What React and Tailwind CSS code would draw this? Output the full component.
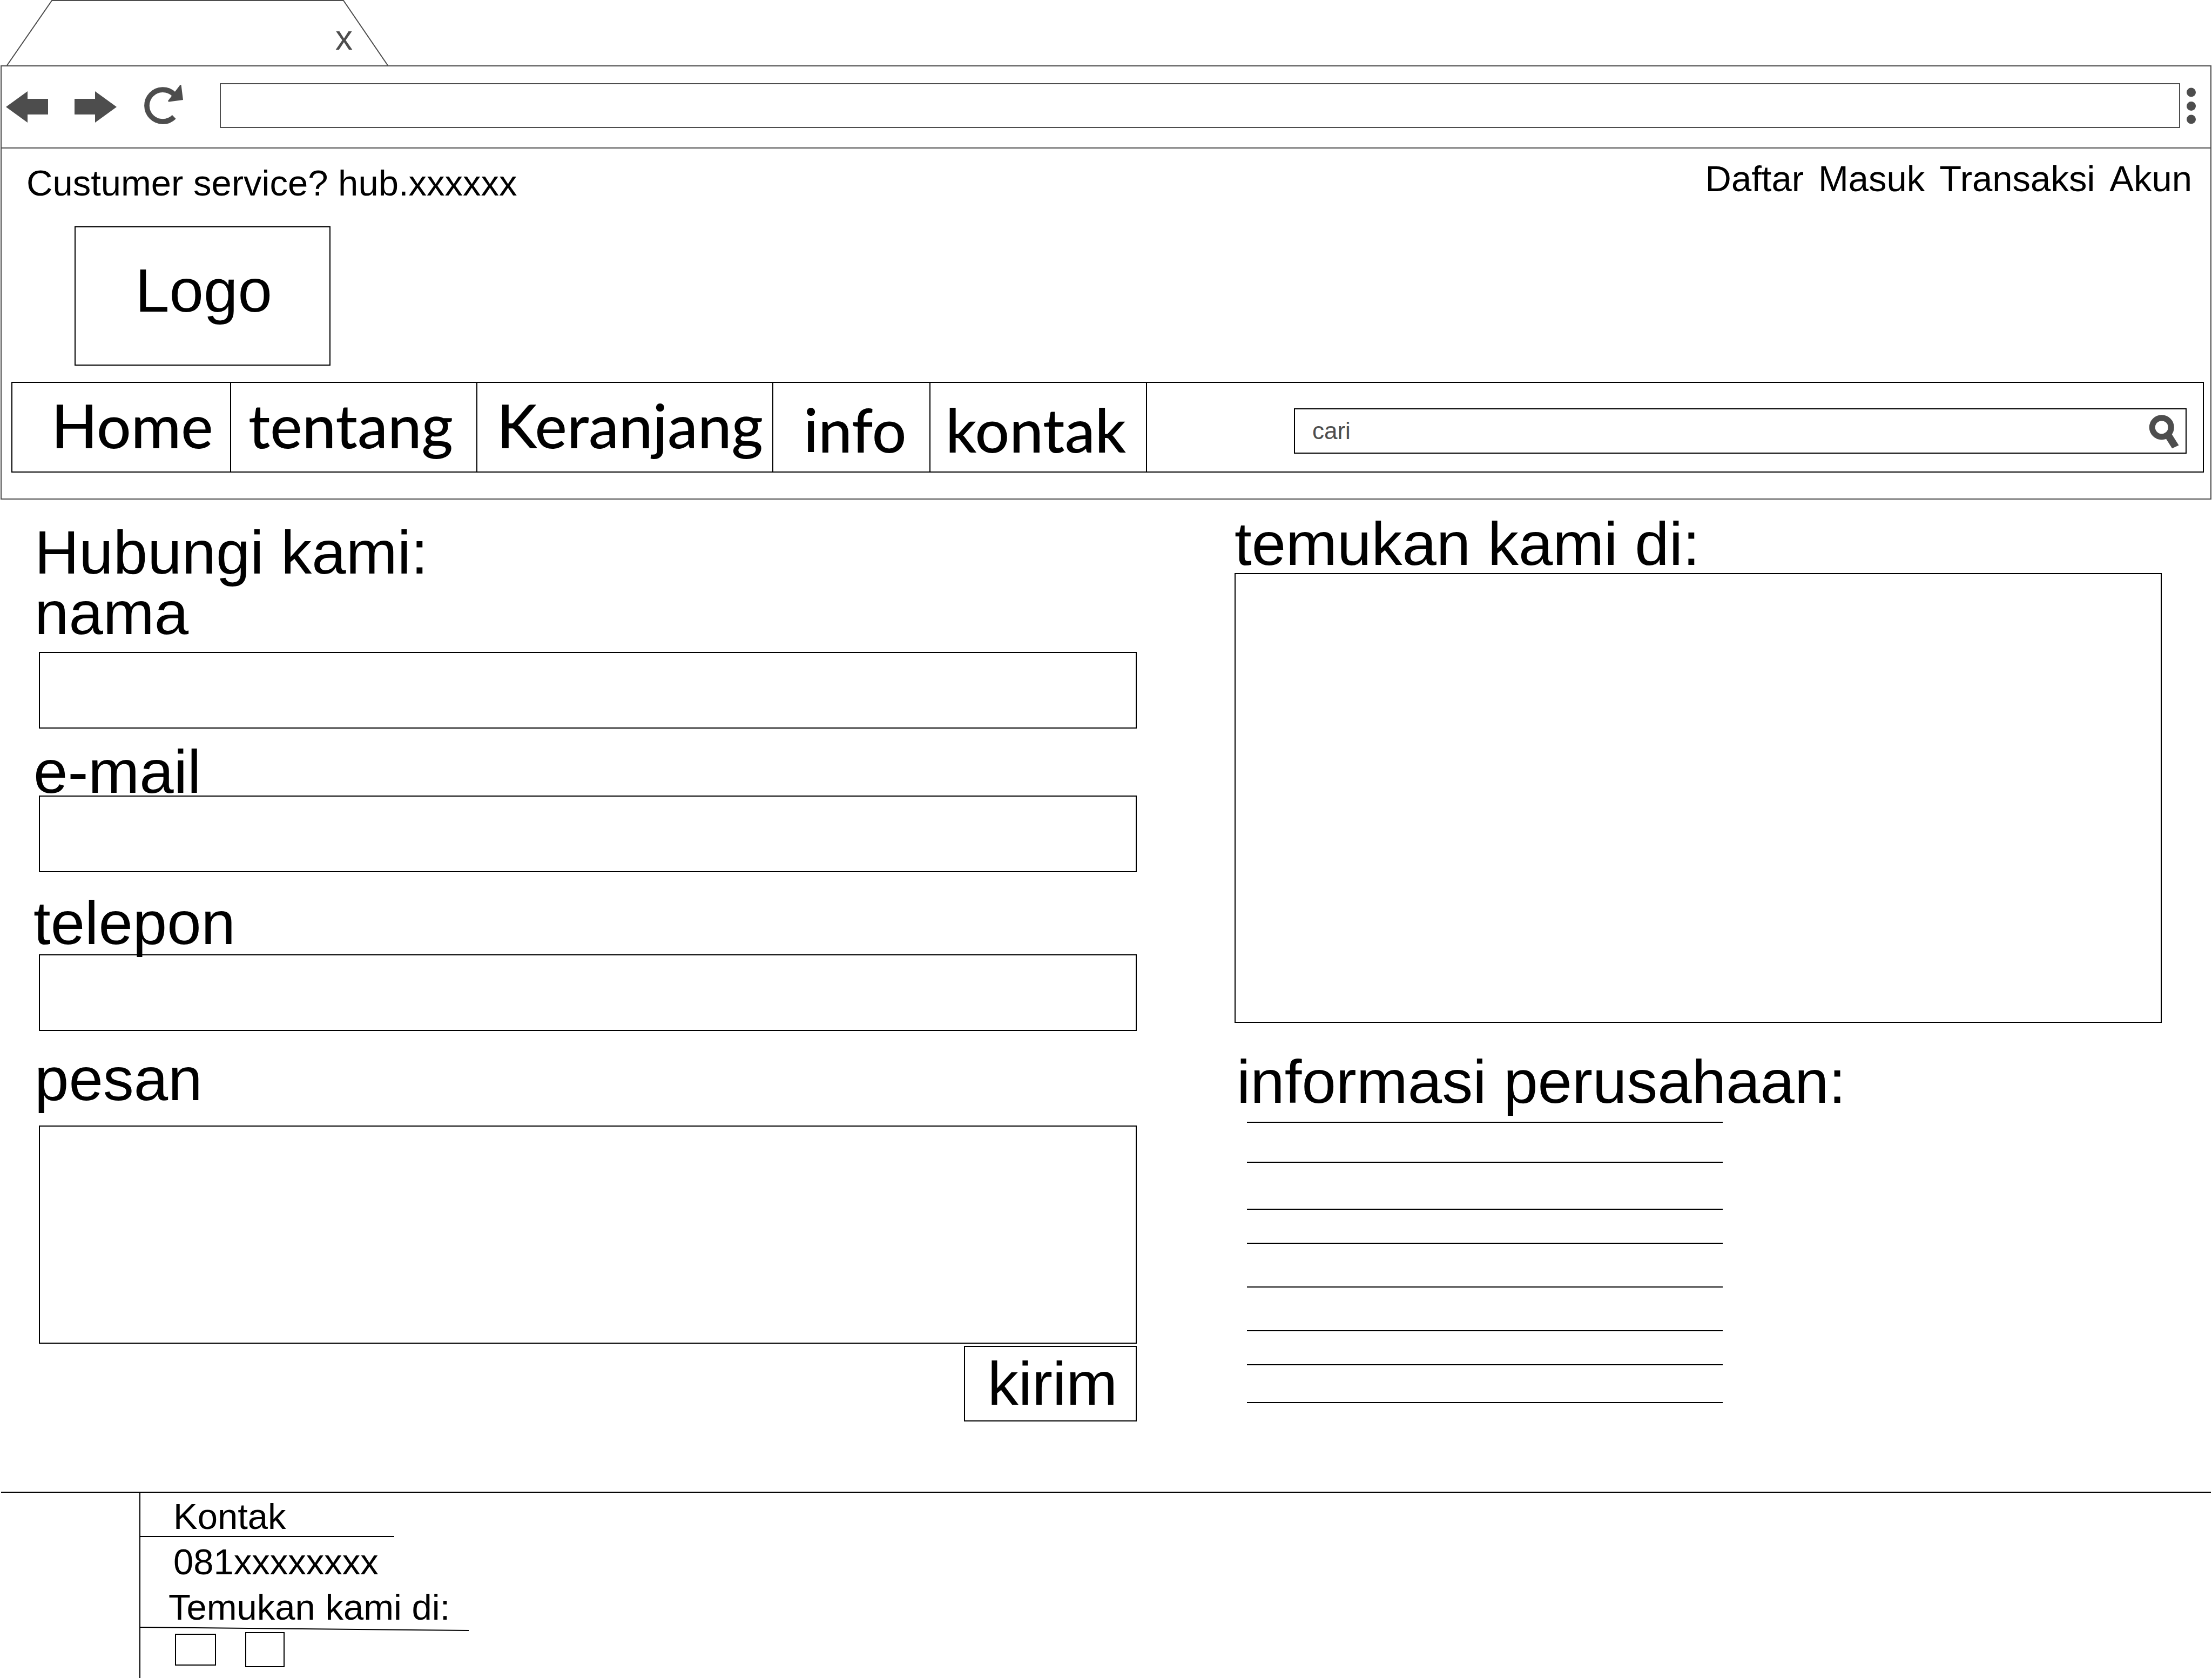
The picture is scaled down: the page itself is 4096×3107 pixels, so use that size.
const NAV_ITEMS = [
  { label: "Home", pad: "pl-[72px] pb-2" },
  { label: "tentang", pad: "pl-8 pb-2" },
  { label: "Keranjang", pad: "pl-9 pb-2" },
  { label: "info", pad: "pl-14 pt-2" },
  { label: "kontak", pad: "pl-7 pt-2" },
];

const ACCOUNT_LINKS = ["Daftar", "Masuk", "Transaksi", "Akun"];

const INFO_LINE_GAPS = [
  "mt-[30px]",
  "mt-[72px]",
  "mt-[85px]",
  "mt-[61px]",
  "mt-[79px]",
  "mt-[79px]",
  "mt-[61px]",
  "mt-[68px]",
];

function BackIcon() {
  return (
    <svg className="h-[83px] w-[78px] fill-[#4d4d4d]" viewBox="0 0 78 83" aria-hidden="true">
      <polygon points="0,44 40,15 40,29 78,29 78,58 40,58 40,73" />
    </svg>
  );
}

function ForwardIcon() {
  return (
    <svg className="h-[83px] w-[78px] fill-[#4d4d4d]" viewBox="0 0 78 83" aria-hidden="true">
      <polygon points="78,44 38,15 38,29 0,29 0,58 38,58 38,73" />
    </svg>
  );
}

function ReloadIcon() {
  return (
    <svg className="h-[83px] w-[72px]" viewBox="69 62 254 292" aria-hidden="true">
      <path d="M264 282 A104 104 0 1 1 262 133" fill="none" stroke="#4d4d4d" strokeWidth="34" />
      <path d="M303 74 Q308 70 311 76 L323 171 L230 183 Q223 182 225 176 Z" fill="#4d4d4d" />
    </svg>
  );
}

function DotsIcon() {
  return (
    <svg className="h-[83px] w-[17px] fill-[#4d4d4d]" viewBox="0 0 17 83" aria-hidden="true">
      <circle cx="8.5" cy="17" r="8.5" />
      <circle cx="8.5" cy="42.5" r="8.5" />
      <circle cx="8.5" cy="67" r="8.5" />
    </svg>
  );
}

function SearchIcon() {
  return (
    <svg className="h-20 w-[57px]" viewBox="0 2 57 80" aria-hidden="true">
      <circle cx="24.8" cy="35.3" r="17.5" fill="none" stroke="#4d4d4d" strokeWidth="11" />
      <polygon points="30,46 38,42 43.6,48.1 56.5,68.6 44.2,74.3 33.4,57.2 28,48" fill="#4d4d4d" />
    </svg>
  );
}

function BrowserTab() {
  return (
    <div className="relative ml-3 flex h-[121px] w-[707px] justify-end pt-10 pr-[66px]">
      <svg
        className="absolute inset-0 h-full w-full"
        viewBox="0 0 707 121"
        preserveAspectRatio="none"
        aria-hidden="true"
      >
        <polyline points="1,121 84,1 624,1 706,121" fill="none" stroke="#4d4d4d" strokeWidth="2" />
      </svg>
      <button type="button" className="relative h-[60px] text-[64px] leading-[60px] text-[#4d4d4d]">
        x
      </button>
    </div>
  );
}

function BrowserToolbar() {
  return (
    <div className="flex items-start border-x-2 border-t-2 border-[#4d4d4d] pt-[31px] pr-[27px] pb-9 pl-2">
      <button type="button" aria-label="Back">
        <BackIcon />
      </button>
      <button type="button" aria-label="Forward" className="ml-[49px]">
        <ForwardIcon />
      </button>
      <button type="button" aria-label="Reload" className="ml-[51px]">
        <ReloadIcon />
      </button>
      <input
        type="text"
        aria-label="Address"
        className="ml-[68px] h-[83px] min-w-0 flex-1 border-2 border-[#4d4d4d] px-6 text-[44px] outline-none"
      />
      <button type="button" aria-label="Menu" className="ml-3">
        <DotsIcon />
      </button>
    </div>
  );
}

function SiteHeader() {
  return (
    <header className="border-2 border-[#4d4d4d] pb-12">
      <div className="flex items-start justify-between pr-[34px] pl-[46px] text-[67px] leading-[76px]">
        <p className="pt-[26px]">Custumer service? hub.xxxxxx</p>
        <div className="flex gap-[27px] pt-[18px]">
          {ACCOUNT_LINKS.map((label) => (
            <a key={label} href="#">
              {label}
            </a>
          ))}
        </div>
      </div>

      <a
        href="#"
        className="mt-[42px] ml-[135px] flex h-[258px] w-[474px] items-center justify-center border-2 border-black pb-5 pl-1 text-[114px] leading-[112px]"
      >
        Logo
      </a>

      <nav className="mt-[30px] mr-3 ml-[18px] grid h-[168px] grid-cols-[405fr_456fr_548fr_291fr_401fr_1955fr] border-2 border-black">
        {NAV_ITEMS.map(({ label, pad }) => (
          <a
            key={label}
            href="#"
            className={`flex items-center border-r-2 border-black font-['Comic_Sans_MS',Lato,sans-serif] text-[112px] leading-[112px] font-medium ${pad}`}
          >
            {label}
          </a>
        ))}
        <form className="flex items-start pt-[47px] pr-[30px] pl-[272px]">
          <label className="flex flex-1 items-center border-2 border-black pr-3 pl-8">
            <input
              type="search"
              placeholder="cari"
              aria-label="cari"
              className="h-20 min-w-0 flex-1 text-[44px] outline-none placeholder:text-[#4d4d4d] placeholder:opacity-100"
            />
            <SearchIcon />
          </label>
        </form>
      </nav>
    </header>
  );
}

function ContactForm() {
  const label = "block text-[114px] leading-[88px]";
  const field = "ml-[10px] block border-2 border-black bg-transparent px-6 text-[68px] outline-none";
  return (
    <form className="flex flex-col pt-[54px]">
      <h2 className={`${label} pl-[2px]`}>Hubungi kami:</h2>
      <label htmlFor="nama" className={`${label} mt-6 pl-[2px]`}>
        nama
      </label>
      <input id="nama" type="text" className={`${field} mt-[28px] h-[142px]`} />
      <label htmlFor="email" className={`${label} mt-[36px]`}>
        e-mail
      </label>
      <input id="email" type="email" className={`${field} h-[142px]`} />
      <label htmlFor="telepon" className={`${label} mt-[50px]`}>
        telepon
      </label>
      <input id="telepon" type="tel" className={`${field} mt-[14px] h-[142px]`} />
      <label htmlFor="pesan" className={`${label} mt-[45px] pl-[2px]`}>
        pesan
      </label>
      <textarea id="pesan" className={`${field} mt-[42px] h-[404px] resize-none`} />
      <button
        type="submit"
        className="mt-1 h-[140px] w-80 self-end border-2 border-black pl-2 text-[114px] leading-[112px]"
      >
        kirim
      </button>
    </form>
  );
}

function CompanyInfo() {
  return (
    <section className="pt-[38px]">
      <h2 className="text-[114px] leading-[88px]">temukan kami di:</h2>
      <div className="mt-[10px] h-[833px] border-2 border-black" />
      <h2 className="mt-[65px] pl-1 text-[114px] leading-[88px]">informasi perusahaan:</h2>
      <div className="ml-[23px] w-[881px]">
        {INFO_LINE_GAPS.map((gap, i) => (
          <div key={i} className={`h-[2px] bg-black ${gap}`} />
        ))}
      </div>
    </section>
  );
}

function SiteFooter() {
  return (
    <footer className="mx-[2px] mt-[130px] border-t-2 border-black">
      <div className="ml-64 border-l-2 border-black pb-5 text-[67px] leading-[72px]">
        <p className="w-[470px] border-b-2 border-black pt-2 pl-[61px]">Kontak</p>
        <p className="mt-[10px] pl-[61px]">081xxxxxxxx</p>
        <p className="mt-3 pl-[52px]">Temukan kami di:</p>
        <svg className="block h-2 w-[608px]" viewBox="0 0 608 8" aria-hidden="true">
          <line x1="0" y1="1" x2="608" y2="7" stroke="black" strokeWidth="2" />
        </svg>
        <div className="mt-[2px] flex items-center gap-[54px] pl-16">
          <a href="#" aria-label="Social link 1" className="h-[59px] w-[76px] border-2 border-black" />
          <a href="#" aria-label="Social link 2" className="h-[65px] w-[73px] border-2 border-black" />
        </div>
      </div>
    </footer>
  );
}

export default function App() {
  return (
    <div className="min-h-screen bg-white font-['Liberation_Sans',Arial,sans-serif] text-black">
      <BrowserTab />
      <div className="mx-px">
        <BrowserToolbar />
        <SiteHeader />
      </div>
      <main className="grid grid-cols-[2043fr_1717fr] gap-x-[181px] pr-[93px] pl-[62px]">
        <ContactForm />
        <CompanyInfo />
      </main>
      <SiteFooter />
    </div>
  );
}
